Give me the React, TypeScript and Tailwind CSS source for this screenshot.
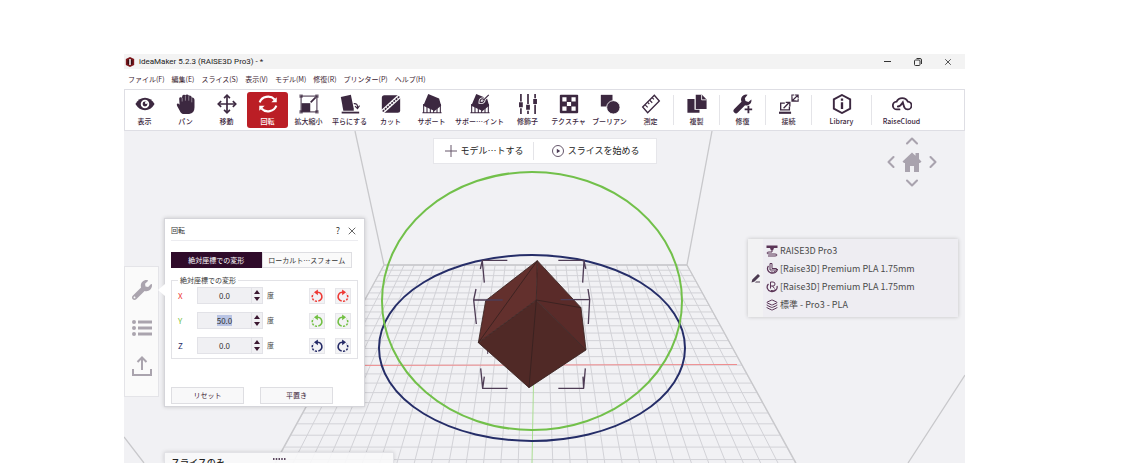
import { useEffect, useRef, useState } from "react";
import type { ComponentType, ReactNode } from "react";
import clsx from "clsx";
import { FaWrench } from "react-icons/fa";
import { ChevronDown, ChevronLeft, ChevronRight, ChevronUp, Layers, X } from "lucide-react";

interface IconProps {
  className?: string;
}

interface Tool {
  name: string;
  icon: ComponentType<IconProps>;
  wide?: boolean;
  divided?: boolean;
}

function Svg({ className, children }: { className?: string; children: ReactNode }) {
  return (
    <svg viewBox="0 0 24 24" className={className} fill="none" stroke="currentColor" strokeWidth="2" aria-hidden="true">
      {children}
    </svg>
  );
}

const EyeIcon = ({ className }: IconProps) => (
  <Svg className={className}>
    <path d="M.5 12Q5 4.500 12 4.500T23.500 12Q19 19.500 12 19.500T.5 12z" fill="currentColor" stroke="none" />
    <circle cx="12" cy="12" r="4" fill="currentColor" stroke="#fff" strokeWidth="2.200" />
    <circle cx="13.300" cy="10.700" r="1.300" fill="#fff" stroke="none" />
  </Svg>
);

const HandIcon = ({ className }: IconProps) => (
  <Svg className={className}>
    <path d="M3.800 5.500Q4.200 3.500 6 4q.8.200 1.200.8L7.500 2.500Q8 .8 10 1q.8.100 1.200.6Q12 .3 13.600.5q1.400.2 1.900 1.500Q17 1.400 18 2.500q.8.900.8 2 1.500-.5 2.600.5.800.8.800 2.500V16q0 7.500-6.500 8H10q-4 0-5.500-4L1.200 14.200Q.4 12 1.800 11.500q1.200-.3 2.500 1.500z" fill="currentColor" stroke="none" />
    <path d="M7.400 4.800V9M11.300 2v6M15.300 2.500V8M18.900 5v5" stroke="#fff" strokeWidth=".5" />
  </Svg>
);

const MoveIcon = ({ className }: IconProps) => (
  <Svg className={className}>
    <path d="M12 2v20M2 12h20" />
    <path d="M8.500 5 12 1.500 15.500 5M8.500 19l3.500 3.500 3.500-3.500M5 8.500 1.500 12 5 15.500M19 8.500l3.500 3.500-3.500 3.500" />
  </Svg>
);

const RotateIcon = ({ className }: IconProps) => (
  <Svg className={className}>
    <path d="M2 10A10.500 9.500 0 0 1 20 6.500M22 14A10.500 9.500 0 0 1 4 17.500" strokeWidth="2.500" />
    <path d="M22.500 4v6H16zM1.500 20v-6H8z" fill="currentColor" stroke="none" />
  </Svg>
);

const ScaleIcon = ({ className }: IconProps) => (
  <Svg className={className}>
    <path d="M2.500 2.500h19v19h-19z" strokeWidth="1.200" />
    <path d="M.5.5h4v4h-4zM19.500.5h4v4h-4zM.5 19.500h4v4h-4zM19.500 19.500h4v4h-4z" fill="currentColor" fillOpacity=".7" stroke="none" />
    <path d="M3 11h10.500v10.500H3z" fill="currentColor" stroke="none" />
    <path d="m14 10 6-6" strokeWidth="2" />
  </Svg>
);

const FlattenIcon = ({ className }: IconProps) => (
  <Svg className={className}>
    <path d="M1 3.500 13 .8l3.500 16.700V20H4z" fill="currentColor" stroke="none" />
    <path d="M2 22.300h21" strokeWidth="2.200" />
    <path d="M16.500 11.500q5-.5 4.500 5M18 14.500l3 3 2.500-3.500" strokeWidth="1.400" />
  </Svg>
);

const CutIcon = ({ className }: IconProps) => (
  <Svg className={className}>
    <rect x="1" y="1.500" width="22" height="21" rx="3" fill="currentColor" stroke="none" />
    <path d="M0 23 24 1" stroke="#fff" strokeWidth="5" />
    <path d="M2 21 22 3" strokeWidth="2" strokeDasharray="2.500 1" />
  </Svg>
);

const SupportIcon = ({ className }: IconProps) => (
  <Svg className={className}>
    <path d="M.5 22.500h23M2 12v10M6 14v8M10 16v6M14 16v6M18 14v8M22 12v10" strokeWidth="1.300" />
    <path d="M7.500 0 20.500 5.500 23 14 15 20.500 1.500 14z" fill="currentColor" stroke="none" />
  </Svg>
);

const SupportPaintIcon = ({ className }: IconProps) => (
  <Svg className={className}>
    <path d="M.5 22.500h23M2 12v10M6 14v8M10 16v6M14 16v6M18 14v8M22 12v10" strokeWidth="1.300" />
    <path d="M7.500 0 20.500 5.500 23 14 15 20.500 1.500 14z" fill="currentColor" stroke="none" />
    <path d="m22.500 1-6 6M16 6q-4-1-4 4 5 .5 5-3z" stroke="#fff" strokeWidth="3.500" />
    <path d="m22.500 1-6 6M16 6q-4-1-4 4 5 .5 5-3z" strokeWidth="1.400" />
  </Svg>
);

const ModifierIcon = ({ className }: IconProps) => (
  <Svg className={className}>
    <path d="M3.500 0v24M12 0v24M20.500 0v24" strokeWidth="2" />
    <path d="M3.500 9v8M12 12v8M20.500 5v8" stroke="#fff" strokeWidth="6" />
    <path d="M3.500 10v6M12 13v6M20.500 6v6" strokeWidth="4.500" />
  </Svg>
);

const TextureIcon = ({ className }: IconProps) => (
  <Svg className={className}>
    <rect x="1" y="1" width="22" height="22" rx="1" fill="currentColor" stroke="none" />
    <path d="M4 4h5v5H4zM15 4h5v5h-5zM9.500 9.500h5v5h-5zM4 15h5v5H4zM15 15h5v5h-5z" fill="#fff" stroke="none" />
  </Svg>
);

const BooleanIcon = ({ className }: IconProps) => (
  <Svg className={className}>
    <path d="M1 1h14v14H1z" fill="currentColor" stroke="none" />
    <circle cx="16" cy="16" r="8" fill="currentColor" stroke="#fff" strokeWidth="1" />
  </Svg>
);

const MeasureIcon = ({ className }: IconProps) => (
  <Svg className={className}>
    <path d="m2 15.500 14-14L22 8.500l-14 14z" strokeWidth="1.600" />
    <path d="m5 13 3 3M8 10l2 2M10.500 7.500l3 3M13.500 4.500l2 2" strokeWidth="1.300" />
  </Svg>
);

const DuplicateIcon = ({ className }: IconProps) => (
  <Svg className={className}>
    <path d="M.5 6H9v13h6v3.500H.5z" fill="currentColor" stroke="none" />
    <path d="M10.500 1H18l5.500 5.500V18h-13z" fill="currentColor" stroke="none" />
    <path d="M17.500 1v6h6" stroke="#fff" strokeWidth="1" />
  </Svg>
);

const RepairIcon = ({ className }: IconProps) => (
  <Svg className={className}>
    <path d="M17.500 1a6 6 0 0 0-7.300 8.200L1.500 18a3 3 0 0 0 4.300 4.300l8.700-8.800A6 6 0 0 0 22 6.500l-3.500 3-3.500-1-.8-3.300z" fill="currentColor" stroke="none" />
    <path d="M18.500 14v9M14 18.500h9" strokeWidth="2.200" />
  </Svg>
);

const ConnectIcon = ({ className }: IconProps) => (
  <Svg className={className}>
    <path d="M7 11H2v8h10.500v-4" strokeWidth="1.600" />
    <path d="M0 22.500h14.500" strokeWidth="2.600" />
    <path d="m5.500 17 7-7M8 10h5v5" strokeWidth="1.600" />
    <path d="M18 1.200h-2.500v7.300H23V6M16.500 7.500l6-6M18.800 1.200h4.200v4.200M15.700 4v4.200H20" strokeWidth="1.300" />
  </Svg>
);

const LibraryIcon = ({ className }: IconProps) => (
  <Svg className={className}>
    <path d="m12 1.200 9.800 5.300v11L12 22.800l-9.800-5.300v-11z" strokeWidth="2.300" />
    <path d="M12 10v8M12 5.500V8" strokeWidth="2.800" />
  </Svg>
);

const CloudIcon = ({ className }: IconProps) => (
  <Svg className={className}>
    <path d="M9 18.500H6a4.700 4.700 0 0 1-.5-9.400 7.500 7.500 0 0 1 13.500 0 4.700 4.700 0 0 1-.5 9.400c-3.500 0-4-3-5.500-8.500-2 3-3 5-6 5" strokeWidth="2.200" strokeLinecap="round" />
  </Svg>
);

const tools: Tool[] = [
  { name: "表示", icon: EyeIcon },
  { name: "パン", icon: HandIcon },
  { name: "移動", icon: MoveIcon },
  { name: "回転", icon: RotateIcon },
  { name: "拡大縮小", icon: ScaleIcon },
  { name: "平らにする", icon: FlattenIcon },
  { name: "カット", icon: CutIcon },
  { name: "サポート", icon: SupportIcon },
  { name: "サポー⋯イント", icon: SupportPaintIcon, wide: true },
  { name: "修飾子", icon: ModifierIcon },
  { name: "テクスチャ", icon: TextureIcon },
  { name: "ブーリアン", icon: BooleanIcon },
  { name: "測定", icon: MeasureIcon },
  { name: "複製", icon: DuplicateIcon, divided: true },
  { name: "修復", icon: RepairIcon, divided: true },
  { name: "接続", icon: ConnectIcon, divided: true },
  { name: "Library", icon: LibraryIcon, wide: true, divided: true },
  { name: "RaiseCloud", icon: CloudIcon, wide: true, divided: true },
];

const menus = ["ファイル(F)", "編集(E)", "スライス(S)", "表示(V)", "モデル(M)", "修復(R)", "プリンター(P)", "ヘルプ(H)"];

const axes = [
  { name: "X", value: "0.0", color: "text-[#ee3a35]" },
  { name: "Y", value: "50.0", color: "text-[#72c043]" },
  { name: "Z", value: "0.0", color: "text-[#252a66]" },
];

function TitleBar() {
  return (
    <header className="flex h-[15px] shrink-0 items-center bg-[#f3f3f3] text-[#333]">
      <svg viewBox="0 0 24 24" className="ml-px h-[10px] w-[10px]" aria-hidden="true">
        <path d="M12 0 22 5v14l-10 5L2 19V5z" fill="#7d171c" />
        <path d="M12 4 18 7.500v9L12 20l-6-3.500v-9z" fill="#3b0c12" />
        <path d="M12 5v14" stroke="#fff" strokeWidth="3.500" />
      </svg>
      <h1 className="ml-1 flex-1 font-[Roboto,sans-serif] text-[8px] leading-[15px] text-[#222]">
        ideaMaker 5.2.3 (RAISE3D Pro3) - *
      </h1>
      <div className="flex items-center gap-5 pr-3">
        <button aria-label="最小化" className="flex h-2.5 w-3 items-center justify-center">
          <span className="h-px w-[7px] bg-[#333]" />
        </button>
        <button aria-label="元に戻す" className="flex h-2.5 w-2.5 items-center justify-center">
          <svg viewBox="0 0 10 10" className="h-2.5 w-2.5" fill="none" stroke="currentColor">
            <rect x="1.500" y="3" width="5.500" height="5.500" rx="1" />
            <path d="M3.500 1.500h3.500q1.500 0 1.500 1.500v4" />
          </svg>
        </button>
        <button aria-label="閉じる" className="flex h-2.5 w-2.5 items-center justify-center">
          <X className="h-2.5 w-2.5" strokeWidth={2} />
        </button>
      </div>
    </header>
  );
}

function Toolbar() {
  const [active, setActive] = useState("回転");

  return (
    <div className="flex h-[42px] shrink-0 items-stretch bg-white py-[3px] shadow-[inset_0_0_0_1px_#dedee4]">
      {tools.map((tool) => (
        <div key={tool.name} className="flex">
          {tool.divided && <span className="mx-0.5 my-[3px] w-px bg-[#e4e4e8]" />}
          <button
            onClick={() => setActive(tool.name)}
            className={clsx(
              "flex flex-col items-center gap-0.5 rounded-[3px] pt-0.5",
              tool.wide ? "w-[55px]" : "w-[41px]",
              active === tool.name ? "bg-[#bb1e25] text-white" : "text-[#3c2840]"
            )}
          >
            <tool.icon className="h-5 w-5" />
            <span className="whitespace-nowrap text-[7px] leading-[10px] font-medium">{tool.name}</span>
          </button>
        </div>
      ))}
    </div>
  );
}

// Print bed is 30 x 30 cells, seen from the front in perspective
const CELLS = 30;
const HORIZON = 340;

function bedRow(k: number) {
  return 265 - HORIZON + 1 / (1 / HORIZON - k * 0.0000446);
}

function Scene() {
  const lines = Array.from({ length: CELLS + 1 }, (_, i) => i);
  const spread = (y: number) => 0.547 * (y - 265);

  return (
    <svg viewBox="124 131 841 332" preserveAspectRatio="xMidYMin slice" className="absolute inset-0 h-full w-full" fill="none" aria-hidden="true">
      <g stroke="#d2d2d7" strokeWidth="1">
        {/* the middle line is the green axis */}
        {lines.filter((i) => i !== CELLS / 2).map((i) => {
          const t = i / CELLS;
          return <path key={i} d={`M${384 + 303 * t} 265 L${384 - spread(463) + (303 + 2 * spread(463)) * t} 463`} />;
        })}
        {lines.map((i) => {
          const y = bedRow(i);
          return <path key={i} d={`M${384 - spread(y)} ${y} H${687 + spread(y)}`} />;
        })}
      </g>
      <g stroke="#c8c8cb" strokeWidth="1.300">
        <path d="M355 131 384 265 275 463M712 131 687 265 796 463M384 265H687" />
        <path d="M124 437 144 463M965 375 908 463" />
      </g>
      <path d="M328 365.500 737 364.500" stroke="#f08b8d" />
      <path d="M535 302 532 463" stroke="#a9dd91" />
      <ellipse cx="532" cy="348" rx="153" ry="93" stroke="#252d68" strokeWidth="2" />
      <ellipse cx="532" cy="301" rx="150" ry="129" stroke="#72c04a" strokeWidth="2" />
      <g transform="translate(470 250) scale(.3333)" strokeLinejoin="round">
        <path d="M53 290v22" stroke="#5c4860" strokeWidth="3" />
        <path d="M202 32 47 152 25 278 199 150z" fill="#63302d" />
        <path d="M202 32 333 173 348 300 199 150z" fill="#5a2b29" />
        <path d="M199 150 25 278 177 413 348 300z" fill="#502926" />
        <path d="M202 32 47 152 25 278 177 413 348 300 333 173zM202 32 199 150 177 413M202 32 25 278 199 150 348 300M199 150 333 173" stroke="#36201f" strokeWidth="2.500" />
        <g stroke="#4e3c55" strokeWidth="4">
          <path d="M112 31H37L31 57M37 34 43 98M265 31H342L347 57M342 34 338 98" />
          <path d="M10 150H98M18 117 11 150 19 222M272 149H359M354 117 359 149 355 222" />
          <path d="M32 355 38 415H113M38 415 43 380M265 415H341L346 355M341 415 339 380" />
        </g>
      </g>
    </svg>
  );
}

function ActionBar() {
  return (
    <div className="absolute top-[7px] left-1/2 flex h-[26px] w-[224px] -translate-x-1/2 items-center border border-[#e6e6ea] bg-white text-[9px] text-[#222]">
      <button className="flex h-full flex-1 items-center pl-[11px] whitespace-nowrap">
        <svg viewBox="0 0 12 12" className="mr-1 h-3 w-3" stroke="#66566b" aria-hidden="true">
          <path d="M6 0v12M0 6h12" />
        </svg>
        モデル⋯トする
      </button>
      <span className="h-[18px] w-px bg-[#e4e4e8]" />
      <button className="flex h-full items-center pr-4 pl-[18px] whitespace-nowrap">
        <svg viewBox="0 0 12 12" className="mr-1 h-3 w-3" fill="none" stroke="#66566b" aria-hidden="true">
          <circle cx="6" cy="6" r="5.500" />
          <path d="M4.800 3.800v4.400L8.200 6z" fill="#4b3a55" stroke="none" />
        </svg>
        スライスを始める
      </button>
    </div>
  );
}

function ViewPad() {
  return (
    <div className="absolute top-0.5 right-6 grid grid-cols-[16px_26px_16px] grid-rows-[16px_26px_16px] place-items-center text-[#a9a3ae]">
      <button aria-label="上" className="col-start-2">
        <ChevronUp className="h-5 w-5" strokeWidth={2.5} />
      </button>
      <button aria-label="左" className="col-start-1 row-start-2">
        <ChevronLeft className="h-5 w-5" strokeWidth={2.5} />
      </button>
      <button aria-label="ホーム" className="col-start-2 row-start-2">
        <svg viewBox="0 0 20 20" className="h-5 w-5" fill="currentColor">
          <path d="M.5 9.500 10 .5l3.500 3.200V1H17v6l2.500 2.500-1.500 1.500h-1v9h-5v-6H8v6H3v-9H2z" />
        </svg>
      </button>
      <button aria-label="右" className="col-start-3 row-start-2">
        <ChevronRight className="h-5 w-5" strokeWidth={2.5} />
      </button>
      <button aria-label="下" className="col-start-2 row-start-3">
        <ChevronDown className="h-5 w-5" strokeWidth={2.5} />
      </button>
    </div>
  );
}

function SideRail() {
  return (
    <nav className="absolute top-[135px] left-0 flex w-[35px] flex-col items-center border border-[#e4e4e8] bg-[#fafafa] pt-1 pb-[11px] text-[#aaa4ae]">
      <button aria-label="ツール" className="flex h-[38px] items-center">
        <FaWrench className="h-5 w-5" />
      </button>
      <button aria-label="モデルリスト" className="flex h-[38px] items-center">
        <svg viewBox="0 0 20 16" className="h-4 w-5" fill="currentColor">
          <circle cx="2" cy="2" r="2" />
          <circle cx="2" cy="8" r="2" />
          <circle cx="2" cy="14" r="2" />
          <path d="M6 .5h14v3H6zM6 6.500h14v3H6zM6 12.500h14v3H6z" />
        </svg>
      </button>
      <button aria-label="書き出し" className="flex h-[38px] items-center">
        <svg viewBox="0 0 20 20" className="h-5 w-5" fill="none" stroke="currentColor" strokeWidth="2">
          <path d="M1 13v6h18v-6M10 14V2M5.500 6 10 1.500 14.500 6" />
        </svg>
      </button>
    </nav>
  );
}

function TurnIcon({ flip }: { flip?: boolean }) {
  return (
    <svg viewBox="0 0 16 16" className={clsx("h-3.5 w-3.5", flip && "-scale-x-100")} fill="none" stroke="currentColor" strokeWidth="1.800" aria-hidden="true">
      <path d="M7.500 3.800A5 5 0 1 1 9.500 13.800" />
      <path d="M8 14A5 5 0 0 1 4 5.500" strokeDasharray="2.500 1.400" />
      <path d="M9 .5v6.600L4.500 3.800z" fill="currentColor" stroke="none" />
    </svg>
  );
}

function AxisRow({ name, value, color }: { name: string; value: string; color: string }) {
  const [angle, setAngle] = useState(value);
  const input = useRef<HTMLInputElement>(null);

  useEffect(() => {
    if (name === "Y") {
      input.current?.focus();
      input.current?.select();
    }
  }, [name]);

  const step = (by: number) => setAngle((Number(angle) + by).toFixed(1));

  return (
    <div className="flex h-[17px] items-center">
      <label htmlFor={`axis-${name}`} className={clsx("w-[19px] text-[8px]", color)}>
        {name}
      </label>
      <div className="flex h-[17px] w-[66px] border border-[#e2e2e7] bg-[#f0f0f3]">
        <input
          id={`axis-${name}`}
          ref={input}
          value={angle}
          onChange={(e) => setAngle(e.target.value)}
          className="h-full w-[53px] bg-transparent text-center text-[8px] text-[#333] outline-none selection:bg-[#b9c4e4] selection:text-[#333]"
        />
        <div className="flex flex-1 flex-col items-center justify-evenly border-l border-[#e2e2e7]">
          <button aria-label={`${name} +`} onClick={() => step(1)}>
            <svg viewBox="0 0 6 4" className="h-1 w-1.5" fill="#3a1730"><path d="M3 0 6 4H0z" /></svg>
          </button>
          <button aria-label={`${name} -`} onClick={() => step(-1)}>
            <svg viewBox="0 0 6 4" className="h-1 w-1.5" fill="#3a1730"><path d="M3 4 6 0H0z" /></svg>
          </button>
        </div>
      </div>
      <span className="ml-1 flex-1 text-[7px] text-[#444]">度</span>
      <div className={clsx("flex gap-2.5", color)}>
        <button aria-label={`${name} 左回転`} onClick={() => step(-15)} className="flex h-4 w-4 items-center justify-center border border-[#e6e6ea] bg-[#f3f3f5]">
          <TurnIcon />
        </button>
        <button aria-label={`${name} 右回転`} onClick={() => step(15)} className="flex h-4 w-4 items-center justify-center border border-[#e6e6ea] bg-[#f3f3f5]">
          <TurnIcon flip />
        </button>
      </div>
    </div>
  );
}

function RotateDialog() {
  const [tab, setTab] = useState(0);

  return (
    <section className="absolute top-[87px] left-10 w-[201px] border border-[#d5d5da] bg-white px-1.5 pb-0.5 text-[7px] text-[#333] shadow-[0_0_4px_rgba(0,0,0,0.18)]">
      <svg viewBox="0 0 7 12" className="absolute top-[65px] -left-[7px] h-3 w-[7px]" fill="#fff" aria-hidden="true">
        <path d="M7 0v12L0 6z" />
      </svg>
      <div className="flex h-[22px] items-center border-b border-[#ececf0] pt-0.5">
        <h2 className="flex-1">回転</h2>
        <button aria-label="ヘルプ" className="mr-1.5 text-[9px]">?</button>
        <button aria-label="閉じる">
          <X className="h-3 w-3" strokeWidth={1.5} />
        </button>
      </div>
      <div className="mt-[11px] mr-1.5 grid grid-cols-2">
        {["絶対座標での変形", "ローカルト⋯スフォーム"].map((name, i) => (
          <button
            key={name}
            onClick={() => setTab(i)}
            className={clsx(
              "h-4 border whitespace-nowrap",
              tab === i ? "border-[#2f0b2a] bg-[#2f0b2a] text-white" : "border-[#dedee2] bg-[#fafafa]"
            )}
          >
            {name}
          </button>
        ))}
      </div>
      <fieldset className="mt-[7px] flex flex-col gap-2 border border-[#e2e2e6] pt-0.5 pr-1.5 pb-1 pl-1.5">
        <legend className="px-0.5 leading-[10px]">絶対座標での変形</legend>
        {axes.map((axis) => (
          <AxisRow key={axis.name} {...axis} />
        ))}
      </fieldset>
      <div className="mt-7 flex gap-4 text-[#3c1a35]">
        <button className="h-[17px] w-[73px] border border-[#dedee2] bg-[#f8f8f9]">リセット</button>
        <button className="h-[17px] w-[73px] border border-[#dedee2] bg-[#f8f8f9]">平置き</button>
      </div>
    </section>
  );
}

const PrinterIcon = ({ className }: IconProps) => (
  <Svg className={className}>
    <path d="M1 1h22v5H1zM8 6h8l-2 5h-4z" fill="currentColor" stroke="none" />
    <path d="M12 11v3H6q-4 0-4 2t4 2h12q4 0 4 2t-4 2H4" />
  </Svg>
);

const NozzleLeftIcon = ({ className }: IconProps) => (
  <Svg className={className}>
    <path d="M5 6A10 9 0 1 0 23 12" strokeWidth="2.500" />
    <path d="M8 1h4v10h9v3H8zM10 18q6 2 9-2" />
  </Svg>
);

const NozzleRightIcon = ({ className }: IconProps) => (
  <Svg className={className}>
    <path d="M5 6A10 9 0 1 0 22 10" strokeWidth="2.500" />
    <path d="M9 15V2h5q4 0 4 4t-4 4h-4M13 10l4 5M10 19q6 2 9-2" />
  </Svg>
);

function PrinterPanel() {
  const rows = [
    { icon: PrinterIcon, text: "RAISE3D Pro3" },
    { icon: NozzleLeftIcon, text: "[Raise3D] Premium PLA 1.75mm" },
    { icon: NozzleRightIcon, text: "[Raise3D] Premium PLA 1.75mm" },
    { icon: Layers, text: "標準 - Pro3 - PLA" },
  ];

  return (
    <aside className="absolute top-[108px] right-[7px] flex w-[210px] bg-[#eeedf2] shadow-[0_0_4px_rgba(0,0,0,0.2)]">
      <button aria-label="編集" className="flex w-[15px] items-center justify-center bg-[#f2f2f3] text-[#4b3a50]">
        <svg viewBox="0 0 10 10" className="h-2.5 w-2.5" aria-hidden="true">
          <path d="m.5 9.500.8-3L7 1l2 2-5.500 5.500zM5 8.500h4v1H4z" fill="currentColor" />
        </svg>
      </button>
      <ul className="flex-1 py-[3px] pl-[3px]">
        {rows.map((row, i) => (
          <li key={i} className="flex h-[18px] items-center gap-0.5 text-[9px] text-[#4a4a4a]">
            <row.icon className="h-3 w-3 text-[#5b3557]" />
            {row.text}
          </li>
        ))}
      </ul>
    </aside>
  );
}

function SlicePanel() {
  return (
    <section className="absolute bottom-0 left-10 h-[11px] w-[230px] overflow-hidden border border-b-0 border-[#e2e2e6] bg-[#f8f8f9]/90 shadow-[0_0_4px_rgba(0,0,0,0.15)]">
      <div className="flex justify-between px-1.5">
        <h2 className="flex-1 pt-[3px] text-[9px] leading-[14px] font-medium text-[#222]">スライスのみ</h2>
        <svg viewBox="0 0 13 2" className="mt-[5px] h-0.5 w-[13px]" fill="#5c4860" aria-hidden="true">
          <path d="M0 0h1.500v2H0zM2.750 0h1.500v2h-1.500zM5.500 0H7v2H5.500zM8.250 0h1.500v2h-1.500zM11 0h1.500v2H11z" />
        </svg>
        <span className="flex-1" />
      </div>
    </section>
  );
}

export default function App() {
  return (
    <div className="flex h-screen flex-col overflow-hidden bg-white pt-[54px] pr-[163px] pl-[124px] font-['Noto_Sans_CJK_JP','Noto_Sans',sans-serif]">
      <TitleBar />
      <nav className="flex h-5 shrink-0 items-center gap-[7px] bg-white pl-1 text-[7px] text-[#3a2230]">
        {menus.map((menu) => (
          <button key={menu} className="whitespace-nowrap">
            {menu}
          </button>
        ))}
      </nav>
      <Toolbar />
      <main className="relative min-h-0 flex-1 overflow-hidden bg-[#f1f1f4]">
        <Scene />
        <ActionBar />
        <ViewPad />
        <SideRail />
        <PrinterPanel />
        <SlicePanel />
        <RotateDialog />
      </main>
    </div>
  );
}
